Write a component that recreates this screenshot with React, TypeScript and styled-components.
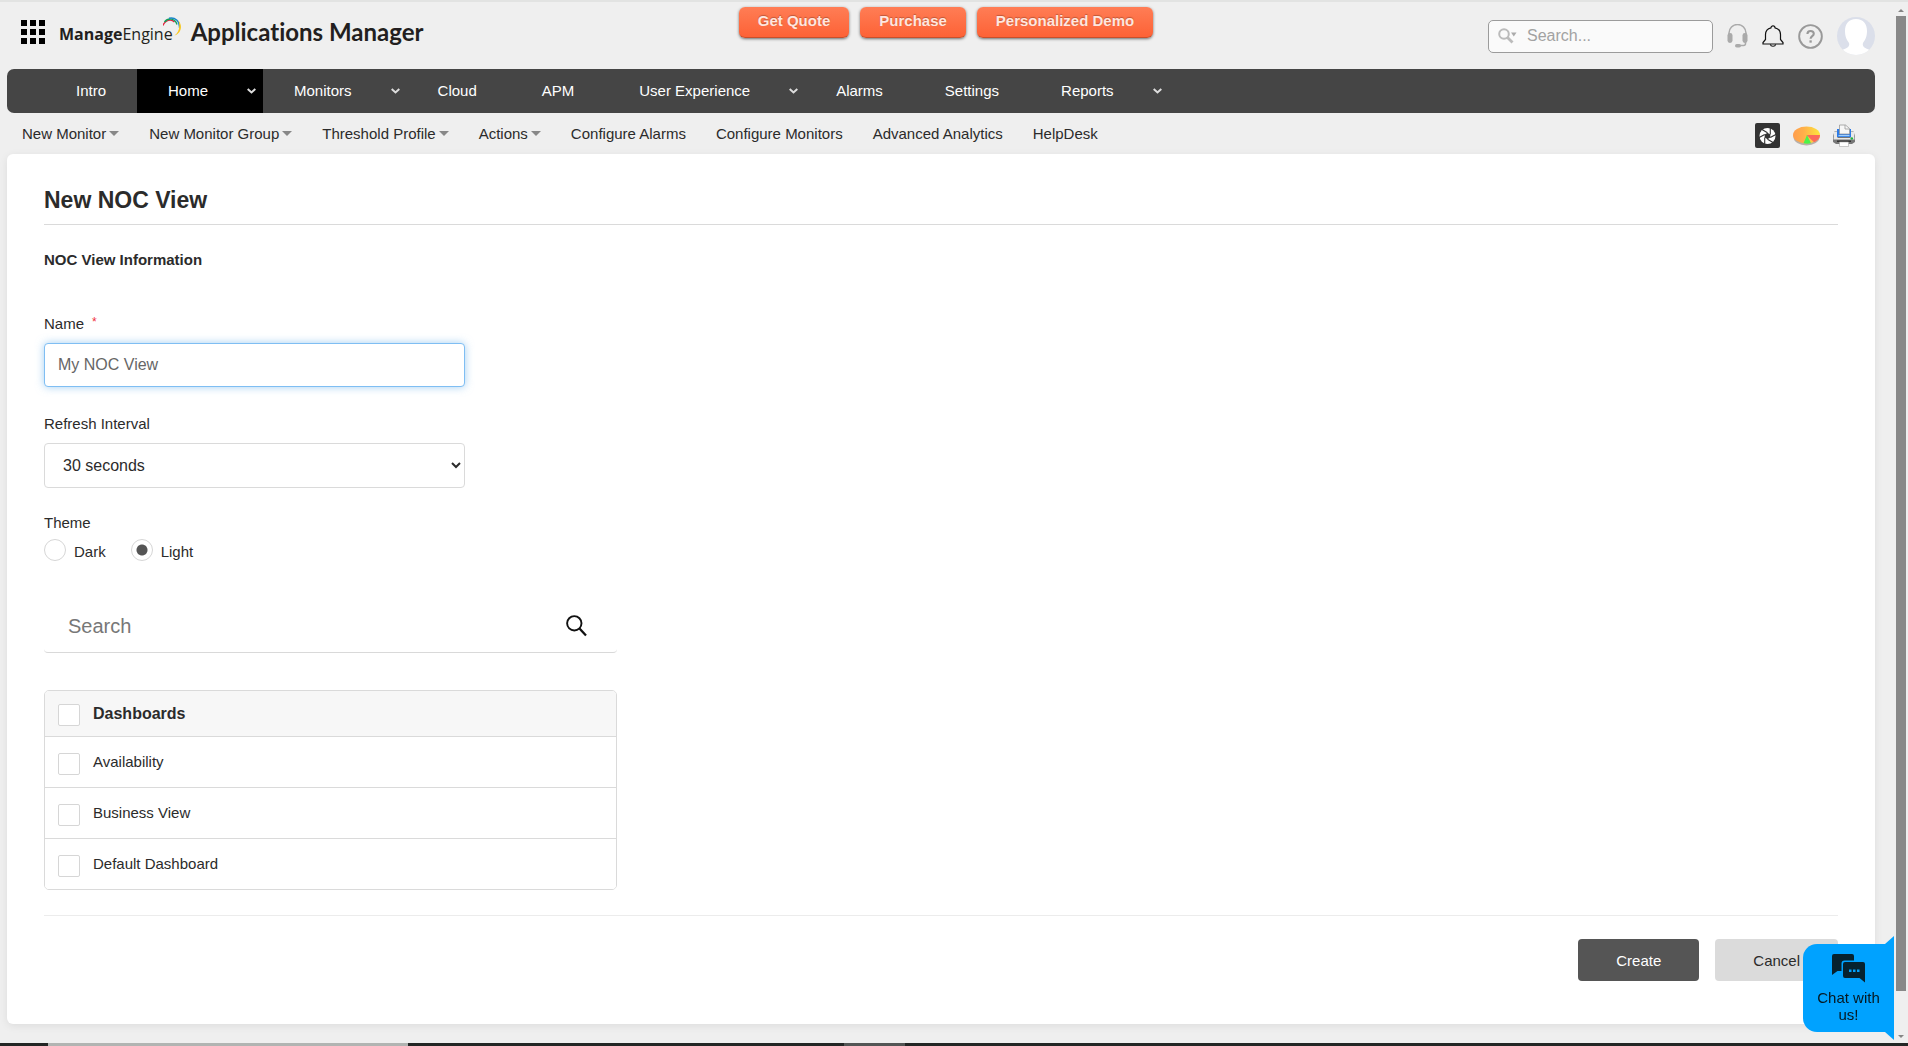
import React from "react";
import styled, { createGlobalStyle, css } from "styled-components";

const GlobalStyle = createGlobalStyle`
  *, *::before, *::after { box-sizing: border-box; }
  body {
    margin: 0;
    background: #efefef;
    color: #2b2b2b;
    font-family: "Liberation Sans", Arial, sans-serif;
    font-size: 15px;
    line-height: 18px;
  }
  button, input, select { font-family: inherit; }
  a { color: inherit; text-decoration: none; }
`;

const Window = styled.div`
  display: flex;
  flex-direction: column;
  min-height: 100vh;
`;

const Viewport = styled.div`
  flex: 1;
  display: grid;
  grid-template-columns: minmax(0, 1fr) 14px;
`;

const Page = styled.div`
  display: flex;
  flex-direction: column;
  padding: 0 19px 19px 7px;
  border-top: 2px solid #e2e3e2;
`;

/* ---------- header ---------- */

const Header = styled.header`
  display: grid;
  grid-template-columns: 1fr auto 1fr;
  align-items: start;
  height: 67px;
  padding-left: 10px;
`;

const Brand = styled.div`
  display: flex;
  align-items: center;
  height: 60px;
  padding-left: 4px;
`;

const AppsButton = styled.button`
  display: block;
  padding: 0;
  border: 0;
  background: none;
  line-height: 0;
`;

const Logo = styled.a`
  display: flex;
  align-items: center;
  margin-left: 14px;
  color: #231f20;
`;

const Maker = styled.span`
  padding-top: 5px;
  font-family: "Open Sans", sans-serif;
  font-size: 16px;
  line-height: 25px;

  b { font-weight: 700; }
`;

const LogoArc = styled.svg`
  align-self: flex-start;
  margin-left: -10px;
`;

const Product = styled.span`
  margin-left: 9px;
  font-family: Lato, sans-serif;
  font-size: 24px;
  font-weight: 700;
  font-variant-ligatures: none;
  line-height: 30px;
`;

const PromoBar = styled.div`
  display: flex;
  gap: 11px;
  padding-top: 5px;
`;

const Promo = styled.button`
  height: 31px;
  padding: 0 19px 3px;
  border: 0;
  border-bottom: 1px solid #c94f2b;
  border-radius: 6px;
  background: linear-gradient(#ff7d55, #fd6236);
  box-shadow: 0 1px 3px rgba(0, 0, 0, 0.55);
  color: #ffe6df;
  font-size: 15px;
  font-weight: 700;
  text-shadow: 0 -1px 1px rgba(0, 0, 0, 0.25);
`;

const Tools = styled.div`
  display: flex;
  align-items: center;
  justify-content: flex-end;
  height: 68px;
  gap: 14px;
`;

const HeaderSearch = styled.label`
  display: flex;
  align-items: center;
  gap: 8px;
  width: 225px;
  height: 33px;
  padding: 0 8px;
  border: 1px solid #9b9b9b;
  border-radius: 5px;
  background: #fafafa;

  input {
    flex: 1;
    min-width: 0;
    padding: 0;
    border: 0;
    outline: 0;
    background: none;
    font-size: 16px;
  }
  input::placeholder { color: #a2a2a2; }
`;

const ToolButton = styled.button`
  padding: 0;
  border: 0;
  background: none;
  line-height: 0;
`;

/* ---------- navigation ---------- */

const Nav = styled.nav`
  display: flex;
  height: 44px;
  padding-left: 38px;
  border-radius: 7px;
  background: #454545;
  color: #fff;
`;

const NavItem = styled.a<{ $active?: boolean; $menu?: boolean; $spaced?: boolean }>`
  display: flex;
  align-items: center;
  padding: 0 ${(p) => (p.$menu ? 7 : 31)}px 0 31px;
  margin-right: ${(p) => (p.$spaced ? 3 : 0)}px;
  background: ${(p) => (p.$active ? "#000" : "transparent")};

  svg { margin-left: 39px; }
`;

const SubNav = styled.nav`
  display: flex;
  align-items: center;
  gap: 30px;
  height: 41px;
  padding: 0 20px 0 15px;
`;

const SubItem = styled.a<{ $menu?: boolean }>`
  ${(p) =>
    p.$menu &&
    css`
      display: flex;
      align-items: center;
      gap: 3px;

      &::after {
        content: "";
        border: 5px solid transparent;
        border-top-color: #888;
        border-bottom: 0;
      }
    `}
`;

const SubTools = styled.div`
  display: flex;
  align-items: center;
  gap: 13px;
  margin-left: auto;
  padding-top: 4px;
`;

/* ---------- panel ---------- */

const Panel = styled.main`
  flex: 1;
  padding: 32px 37px 43px;
  border-radius: 6px;
  background: #fff;
  box-shadow: 0 2px 8px rgba(0, 0, 0, 0.08);
`;

const Title = styled.h1`
  margin: 0;
  padding-bottom: 10px;
  border-bottom: 1px solid #dadada;
  font-size: 23px;
  line-height: 28px;
`;

const Section = styled.h2`
  margin: 26px 0 46px;
  font-size: 15px;
  line-height: 18px;
`;

const Field = styled.div`
  display: flex;
  flex-direction: column;
  width: 421px;

  & + & { margin-top: 28px; }
`;

const FieldLabel = styled.label`
  margin-bottom: 10px;
`;

const Required = styled.sup`
  margin-left: 8px;
  color: #f0303c;
  font-size: 12px;
  line-height: 0;
  vertical-align: 3px;
`;

const control = css`
  width: 100%;
  border: 1px solid #dadada;
  border-radius: 4px;
  background-color: #fff;
  color: #2b2b2b;
  font-size: 16px;
`;

const TextInput = styled.input`
  ${control}
  height: 44px;
  padding: 0 13px;

  &::placeholder { color: #666; }
  &:focus {
    outline: 0;
    border-color: #7fbef3;
    box-shadow: 0 0 8px rgba(102, 175, 233, 0.6);
  }
`;

const Select = styled.select`
  ${control}
  height: 45px;
  padding: 0 3px 0 14px;
`;

const Theme = styled.fieldset`
  margin: 26px 0 0;
  padding: 0;
  border: 0;

  legend { padding: 0; margin-bottom: 7px; }
`;

const Options = styled.div`
  display: flex;
  gap: 25px;
`;

const Option = styled.label`
  display: flex;
  align-items: center;
  gap: 8px;
`;

const Radio = styled.input`
  appearance: none;
  width: 22px;
  height: 22px;
  margin: 0 0 3px;
  border: 1px solid #d6d6d6;
  border-radius: 50%;
  background: #fff;

  &:checked { background: radial-gradient(circle, #555 0 5px, #fff 6px); }
`;

const ListSearch = styled.label`
  display: flex;
  align-items: center;
  width: 573px;
  height: 53px;
  margin-top: 36px;
  padding: 0 30px 0 24px;
  border-bottom: 1px solid #d9d9d9;
  border-radius: 4px;

  input {
    flex: 1;
    padding: 0;
    border: 0;
    outline: 0;
    background: none;
    font-size: 20px;
  }
  input::placeholder { color: #777; }
`;

const List = styled.div`
  width: 573px;
  margin-top: 37px;
  border: 1px solid #dadada;
  border-radius: 5px;
  overflow: hidden;
`;

const ListRow = styled.label<{ $head?: boolean }>`
  display: flex;
  align-items: center;
  gap: 13px;
  height: ${(p) => (p.$head ? 45 : 51)}px;
  padding: 0 13px;
  background: ${(p) => (p.$head ? "#f7f7f7" : "#fff")};
  font-size: ${(p) => (p.$head ? 16 : 15)}px;
  font-weight: ${(p) => (p.$head ? 700 : 400)};

  & + & { border-top: 1px solid #dadada; }
`;

const Check = styled.input`
  appearance: none;
  width: 22px;
  height: 22px;
  margin: 3px 0 0;
  border: 1px solid #d6d6d6;
  border-radius: 2px;
  background: #fff;

  &:checked { background: #555; }
`;

const Actions = styled.div`
  display: flex;
  justify-content: flex-end;
  gap: 16px;
  margin-top: 25px;
  padding-top: 23px;
  border-top: 1px solid #ececec;
`;

const Button = styled.button<{ $primary?: boolean }>`
  height: 42px;
  padding: 0 38px;
  border: 0;
  border-radius: 4px;
  background: ${(p) => (p.$primary ? "#555" : "#dbdbdb")};
  color: ${(p) => (p.$primary ? "#fff" : "#2b2b2b")};
  font-size: 15px;
`;

/* ---------- browser edge and chat ---------- */

const ScrollTrack = styled.div`
  display: flex;
  flex-direction: column;
  align-items: center;
  padding: 7px 0 5px;
  border-top: 2px solid #e2e3e2;
`;

const ScrollArrow = styled.span<{ $down?: boolean }>`
  border: 3px solid transparent;
  border-${(p) => (p.$down ? "top" : "bottom")}-color: #858585;
  border-${(p) => (p.$down ? "bottom" : "top")}: 0;
`;

const ScrollThumb = styled.span`
  flex: 1;
  width: 10px;
  margin: 4px 0 44px;
  background: #888;
`;

const Edge = styled.div`
  display: grid;
  grid-template-columns: 48px 360px 436px 61px 1fr;
  height: 3px;
  background: #232625;

  span:nth-child(2) { background: #b1b4b2; }
  span:nth-child(4) { background: #535655; }
`;

const Chat = styled.button`
  position: fixed;
  right: 14px;
  bottom: 14px;
  display: flex;
  flex-direction: column;
  align-items: center;
  width: 91px;
  height: 88px;
  padding: 10px 10px 0;
  border: 0;
  border-radius: 14px 0 0 14px;
  background: #00a2ff;
  color: #061820;
  font-size: 15px;
  line-height: 17px;

  svg { margin-bottom: 6px; }

  &::before, &::after {
    content: "";
    position: absolute;
    right: 0;
    border-right: 9px solid #00a2ff;
  }
  &::before { bottom: 100%; border-top: 8px solid transparent; }
  &::after { top: 100%; border-bottom: 8px solid transparent; }
`;

const NavChevron = () => (
  <svg width="9" height="6" viewBox="0 0 9 6" fill="none" stroke="#ddd" strokeWidth="2">
    <path d="M.7 1l3.800 3.400L8.300 1" />
  </svg>
);

const GridIcon = () => (
  <svg width="24" height="24" viewBox="0 0 24 24">
    {[0, 9, 18].map((y) => [0, 9, 18].map((x) => <rect key={`${x}-${y}`} x={x} y={y} width="6" height="6" />))}
  </svg>
);

const HeadsetIcon = () => (
  <svg width="21" height="24" viewBox="0 0 21 24" fill="none" stroke="#aaa">
    <path d="M2 11V9a8.500 8.500 0 0 1 17 0v2" strokeWidth="1.500" />
    <rect x="0.500" y="9" width="5" height="10" rx="2.400" fill="#aaa" stroke="none" />
    <rect x="15.500" y="9" width="5" height="10" rx="2.400" fill="#aaa" stroke="none" />
    <path d="M18.500 18v1.500a2 2 0 0 1-2 2H12" strokeWidth="1.500" />
    <rect x="8" y="20" width="6" height="3.500" rx="1.700" fill="#aaa" stroke="none" />
  </svg>
);

const BellIcon = () => (
  <svg width="22" height="22" viewBox="0 0 22 22" fill="none" stroke="#111" strokeWidth="1.200">
    <path d="M1 19v-1.500l2.500-3V9.500A7 7 0 0 1 9 2.800C9 .2 13 .2 13 2.800a7 7 0 0 1 5.500 6.700v5l2.500 3V19z" />
    <path d="M8.300 19.300c.7 2.600 4.700 2.600 5.400 0" />
  </svg>
);

const HelpIcon = () => (
  <svg width="25" height="25" viewBox="0 0 26 26" fill="none" stroke="#999">
    <circle cx="13" cy="13" r="11.800" strokeWidth="2" />
    <path d="M9.800 10.500c0-4.300 6.600-4.300 6.600-.3 0 2.500-3.300 2.400-3.300 5.100" strokeWidth="2.200" />
    <path d="M13.100 17v2.400" strokeWidth="2.400" />
  </svg>
);

const Avatar = () => (
  <svg width="38" height="38" viewBox="0 0 38 38">
    <clipPath id="avatar-clip">
      <circle cx="19" cy="19" r="19" />
    </clipPath>
    <g clipPath="url(#avatar-clip)">
      <rect width="38" height="38" fill="#dbdfea" />
      <path
        d="M19 2c-7.500 0-11 5-11 12 0 6 2 9 4 12 1 3-1 5-7 7l-2 5h32l-2-5c-6-2-8-4-7-7 2-3 4-6 4-12 0-7-3.500-12-11-12z"
        fill="#fff"
      />
    </g>
  </svg>
);

const SearchMenuIcon = () => (
  <svg width="22" height="18" viewBox="0 0 22 18" fill="none" stroke="#bbb">
    <circle cx="7" cy="7" r="4.800" strokeWidth="2" />
    <path d="M10.500 10.500l5 5" strokeWidth="2.800" />
    <path d="M14 5.500h5.500L16.800 9.500z" fill="#aaa" stroke="none" />
  </svg>
);

const ShutterIcon = () => (
  <svg width="25" height="25" viewBox="0 0 25 25">
    <rect width="25" height="25" rx="2" fill="#333" />
    <circle cx="12.500" cy="13" r="8" fill="#fff" />
    <path d="M12.500 9.800l2.800 1.600v3.200l-2.800 1.600-2.800-1.600v-3.200z" fill="#333" />
    <g stroke="#333" strokeWidth="1.100">
      {[0, 60, 120, 180, 240, 300].map((a) => (
        <path key={a} d="M12.500 9.800L6.500 6.300" transform={`rotate(${a} 12.500 13)`} />
      ))}
    </g>
  </svg>
);

const PieIcon = () => (
  <svg width="27" height="20" viewBox="0 0 27 20">
    <defs>
      <linearGradient id="pie-fill">
        <stop offset="0" stopColor="#ff9d4d" />
        <stop offset="0.400" stopColor="#ffb04a" />
        <stop offset="1" stopColor="#fde63c" />
      </linearGradient>
    </defs>
    <ellipse cx="13.500" cy="11" rx="13" ry="8.500" fill="#b9b0a8" />
    <ellipse cx="13.500" cy="9" rx="13.500" ry="8.500" fill="url(#pie-fill)" />
    <path d="M13.500 9H27c0 3.500-3 6-6 7.200z" fill="#fb6a5c" />
    <path d="M14 9l4 8.200c-2.500.6-5 .6-7.500 0z" fill="#4df24a" />
  </svg>
);

const PrinterIcon = () => (
  <svg width="22" height="23" viewBox="0 0 22 23">
    <path d="M1.500 7.500h19L22 12v6l-3 2H3l-3-2v-6z" fill="#777" />
    <path d="M1 8h3.500v6h13V8H21l.5 7.500H.5z" fill="#e8e8e8" />
    <path d="M4 5h14v8H4z" fill="#2c7be8" />
    <path d="M5.500 11h11v1.200h-11z" fill="#9fd0ff" />
    <path d="M6.500 1h6l4 3.500V10h-10z" fill="#f7f7f7" stroke="#999" strokeWidth=".8" />
    <path d="M12 1v4h4.500" fill="none" stroke="#999" strokeWidth=".8" />
    <path d="M4 16.500h14v1.500H4z" fill="#333" />
    <path d="M6.500 18h9v4.500h-9z" fill="#fff" stroke="#aaa" strokeWidth=".6" />
    <circle cx="18.800" cy="14.500" r="1.300" fill="#22b340" />
  </svg>
);

const MagnifierIcon = () => (
  <svg width="21" height="22" viewBox="0 0 21 22" fill="none" stroke="#111" strokeWidth="1.900">
    <circle cx="8.300" cy="8.300" r="7.200" />
    <path d="M13.500 13.500l6.500 7" strokeWidth="2.300" />
  </svg>
);

const ChatIcon = () => (
  <svg width="34" height="29" viewBox="0 0 34 29" fill="#06222f">
    <path d="M2 0h18a2 2 0 0 1 2 2v4.500H12.500a3 3 0 0 0-3 3V17H5.500L0 21V2a2 2 0 0 1 2-2z" />
    <path d="M13 8h18a2 2 0 0 1 2 2v18.500L27.500 24H13a2 2 0 0 1-2-2V10a2 2 0 0 1 2-2z" />
    <path d="M17 15.500h2.500V18H17zM21 15.500h2.500V18H21zM25 15.500h2.500V18H25z" fill="#00a2ff" />
  </svg>
);

const navItems = [
  { label: "Intro" },
  { label: "Home", menu: true, active: true },
  { label: "Monitors", menu: true },
  { label: "Cloud", spaced: true },
  { label: "APM", spaced: true },
  { label: "User Experience", menu: true },
  { label: "Alarms" },
  { label: "Settings" },
  { label: "Reports", menu: true },
];

const subItems = [
  { label: "New Monitor", menu: true },
  { label: "New Monitor Group", menu: true },
  { label: "Threshold Profile", menu: true },
  { label: "Actions", menu: true },
  { label: "Configure Alarms" },
  { label: "Configure Monitors" },
  { label: "Advanced Analytics" },
  { label: "HelpDesk" },
];

const dashboards = ["Availability", "Business View", "Default Dashboard"];

export default function App() {
  return (
    <Window>
      <GlobalStyle />
      <Viewport>
        <Page>
          <Header>
            <Brand>
              <AppsButton aria-label="Apps">
                <GridIcon />
              </AppsButton>
              <Logo href="#">
                <Maker>
                  <b>Manage</b>Engine
                </Maker>
                <LogoArc width="19" height="20" viewBox="0 0 19 20" fill="none">
                  <path d="M0 8.500C2 3 8 1.500 11.500 5" stroke="#e0243f" strokeWidth="1.400" />
                  <path d="M1.500 5C5 .5 12 1 14 7.500" stroke="#12a05a" strokeWidth="1.400" />
                  <path d="M6 1.300C12 0 17 4 16.500 11" stroke="#1a86c8" strokeWidth="1.400" />
                  <path d="M15.500 3.500C20 9 18 16.500 11.500 18.500c4-2.500 6-8 4-15z" fill="#fbc91e" />
                </LogoArc>
                <Product>Applications Manager</Product>
              </Logo>
            </Brand>
            <PromoBar>
              <Promo>Get Quote</Promo>
              <Promo>Purchase</Promo>
              <Promo>Personalized Demo</Promo>
            </PromoBar>
            <Tools>
              <HeaderSearch>
                <SearchMenuIcon />
                <input type="text" placeholder="Search..." aria-label="Search" />
              </HeaderSearch>
              <ToolButton aria-label="Support">
                <HeadsetIcon />
              </ToolButton>
              <ToolButton aria-label="Notifications">
                <BellIcon />
              </ToolButton>
              <ToolButton aria-label="Help">
                <HelpIcon />
              </ToolButton>
              <ToolButton aria-label="Profile">
                <Avatar />
              </ToolButton>
            </Tools>
          </Header>

          <Nav>
            {navItems.map((item) => (
              <NavItem key={item.label} href="#" $active={item.active} $menu={item.menu} $spaced={item.spaced}>
                {item.label}
                {item.menu && <NavChevron />}
              </NavItem>
            ))}
          </Nav>

          <SubNav>
            {subItems.map((item) => (
              <SubItem key={item.label} href="#" $menu={item.menu}>
                {item.label}
              </SubItem>
            ))}
            <SubTools>
              <ToolButton aria-label="Snapshot">
                <ShutterIcon />
              </ToolButton>
              <ToolButton aria-label="Reports">
                <PieIcon />
              </ToolButton>
              <ToolButton aria-label="Print">
                <PrinterIcon />
              </ToolButton>
            </SubTools>
          </SubNav>

          <Panel>
            <Title>New NOC View</Title>
            <Section>NOC View Information</Section>
            <Field>
              <FieldLabel htmlFor="view-name">
                Name<Required>*</Required>
              </FieldLabel>
              <TextInput id="view-name" type="text" placeholder="My NOC View" autoFocus />
            </Field>
            <Field>
              <FieldLabel htmlFor="refresh">Refresh Interval</FieldLabel>
              <Select id="refresh" defaultValue="30 seconds">
                <option>30 seconds</option>
              </Select>
            </Field>
            <Theme>
              <legend>Theme</legend>
              <Options>
                <Option>
                  <Radio type="radio" name="theme" value="dark" />
                  Dark
                </Option>
                <Option>
                  <Radio type="radio" name="theme" value="light" defaultChecked />
                  Light
                </Option>
              </Options>
            </Theme>
            <ListSearch>
              <input type="text" placeholder="Search" aria-label="Search dashboards" />
              <MagnifierIcon />
            </ListSearch>
            <List>
              <ListRow $head>
                <Check type="checkbox" />
                Dashboards
              </ListRow>
              {dashboards.map((name) => (
                <ListRow key={name}>
                  <Check type="checkbox" />
                  {name}
                </ListRow>
              ))}
            </List>
            <Actions>
              <Button $primary>Create</Button>
              <Button>Cancel</Button>
            </Actions>
          </Panel>
        </Page>
        <ScrollTrack aria-hidden="true">
          <ScrollArrow />
          <ScrollThumb />
          <ScrollArrow $down />
        </ScrollTrack>
      </Viewport>
      <Edge aria-hidden="true">
        <span />
        <span />
        <span />
        <span />
      </Edge>
      <Chat>
        <ChatIcon />
        Chat with us!
      </Chat>
    </Window>
  );
}
